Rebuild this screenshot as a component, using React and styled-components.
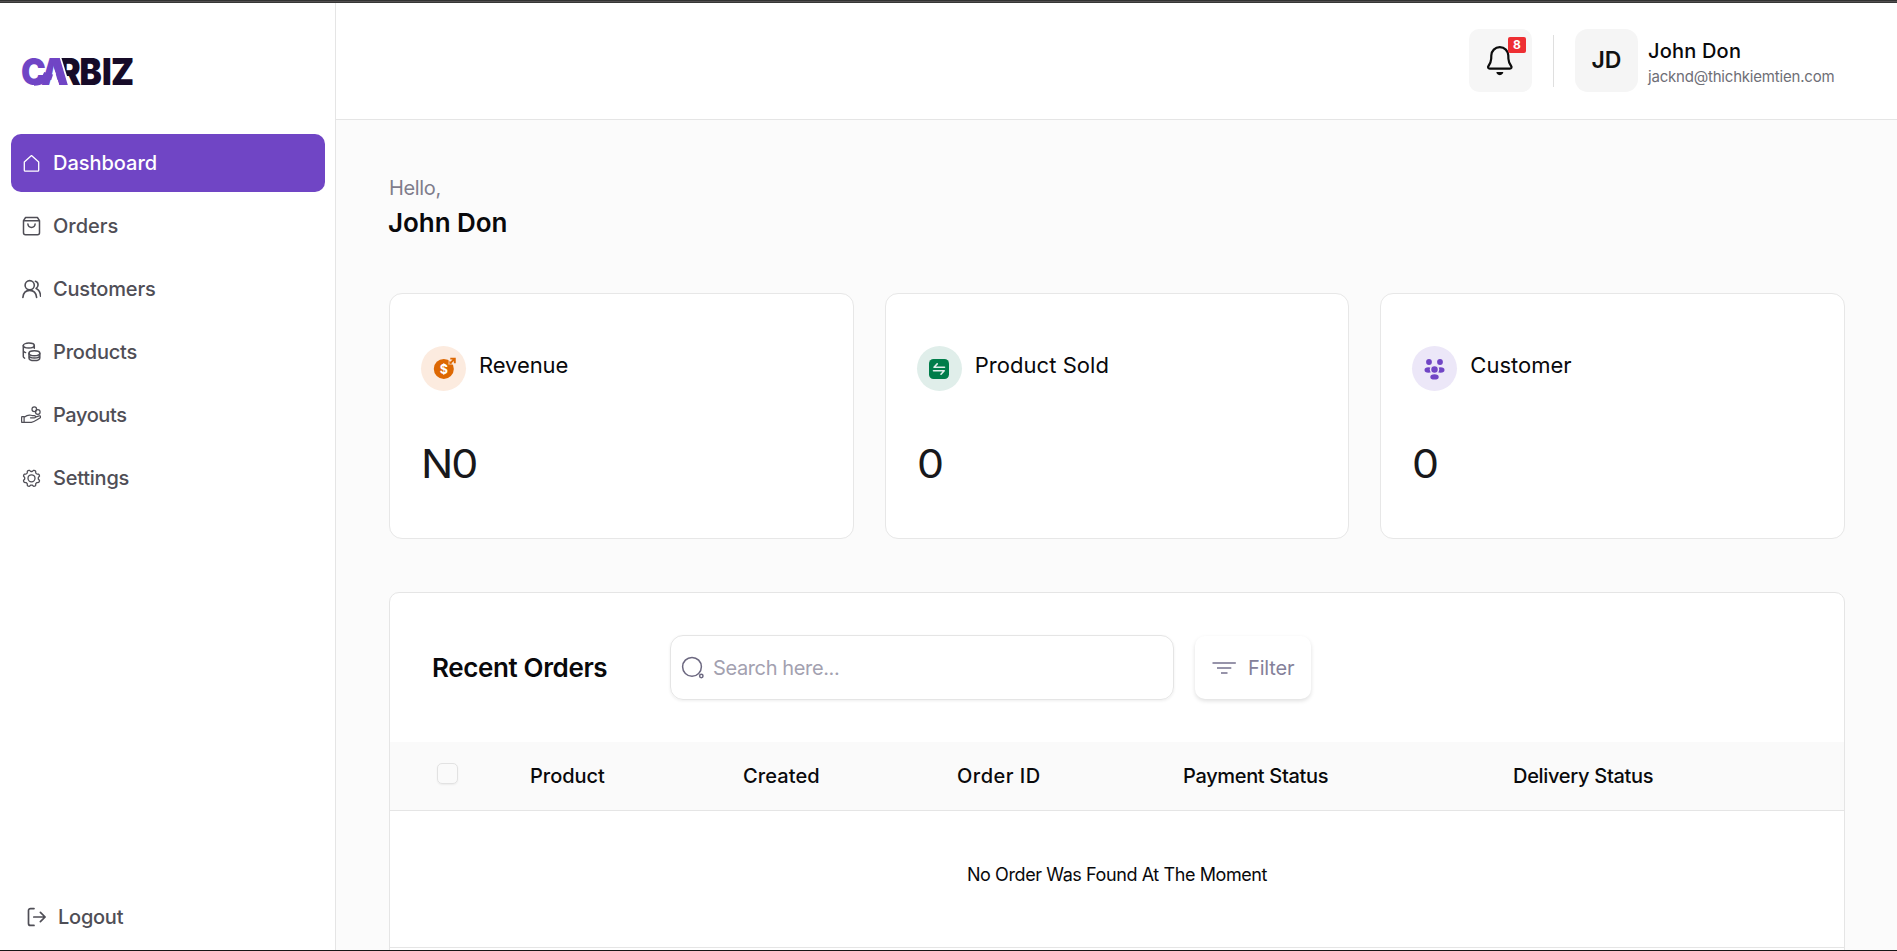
import React from 'react';
import styled, { createGlobalStyle } from 'styled-components';

const GlobalStyle = createGlobalStyle`
  *, *::before, *::after { box-sizing: border-box; }
  body {
    margin: 0;
    background: #fff;
    color: #09090b;
    font-family: Inter, "Liberation Sans", sans-serif;
  }
`;

const purple = '#7045c5';
const ink = '#160b28';
const line = '#e5e5e5';

const Frame = styled.div`
  height: 951px;
  overflow: hidden;
  display: grid;
  grid-template-rows: 3px minmax(0, 1fr) 1px;
`;

const TopEdge = styled.div`
  background: linear-gradient(#323232 0 1px, #535051 1px 2px, #363636 2px);
`;

const BottomEdge = styled.div`
  background: #161616;
`;

const Shell = styled.div`
  display: grid;
  grid-template-columns: 336px minmax(0, 1fr);
  min-height: 0;
`;

const Sidebar = styled.aside`
  display: flex;
  flex-direction: column;
  padding: 53px 10px 0 11px;
  border-right: 1px solid ${line};
`;

const LogoLink = styled.a`
  display: block;
  height: 32px;
  margin: 0 0 46px 11px;

  svg { display: block; overflow: visible; }
`;

const Nav = styled.nav`
  display: flex;
  flex-direction: column;
  gap: 5px;
`;

const NavItem = styled.a`
  display: flex;
  align-items: center;
  gap: 12px;
  height: 58px;
  padding-left: 10px;
  border-radius: 10px;
  font-size: 20px;
  font-weight: 500;
  letter-spacing: ${(p) => p.$track || 0}px;
  color: ${(p) => (p.$active ? '#fff' : '#4f4e56')};
  background: ${(p) => (p.$active ? purple : 'transparent')};

  svg { flex: none; display: block; }
`;

const Logout = styled(NavItem)`
  margin: auto 0 4px;
  padding-left: 15px;
`;

const Main = styled.main`
  min-width: 0;
  display: flex;
  flex-direction: column;
  background: #fbfbfb;
  overflow: hidden;
`;

const Header = styled.header`
  flex: none;
  height: 117px;
  display: flex;
  justify-content: flex-end;
  padding: 26px 62px 0 0;
  background: #fff;
  border-bottom: 1px solid ${line};
`;

const BellButton = styled.div`
  position: relative;
  width: 63px;
  height: 63px;
  border-radius: 10px;
  background: #f6f6f6;
  display: flex;
  align-items: center;
  justify-content: center;

  svg { display: block; }
`;

const Badge = styled.span`
  position: absolute;
  top: 8px;
  right: 6px;
  width: 18px;
  height: 16px;
  border-radius: 2px;
  background: #ee2f33;
  color: #fff;
  font-size: 12px;
  line-height: 16px;
  font-weight: 700;
  text-align: center;
`;

const Divider = styled.div`
  width: 1px;
  height: 52px;
  margin: 6px 21px 0;
  background: #dfdfdf;
`;

const Avatar = styled.div`
  width: 63px;
  height: 63px;
  border-radius: 13px;
  background: #f5f5f5;
  font-size: 23px;
  line-height: 63px;
  font-weight: 600;
  text-align: center;
  color: #111;
`;

const Identity = styled.div`
  width: 187px;
  margin-left: 10px;
  padding-top: 8px;
  white-space: nowrap;
`;

const UserName = styled.div`
  font-size: 20px;
  line-height: 29px;
  font-weight: 500;
  letter-spacing: 0.2px;
`;

const UserEmail = styled.div`
  font-size: 15px;
  line-height: 22px;
  letter-spacing: -0.2px;
  color: #6e6e76;
`;

const Content = styled.div`
  padding: 53px 52px 0 53px;
`;

const Greeting = styled.div`
  font-size: 20px;
  line-height: 30px;
  letter-spacing: -0.34px;
  color: #7f7d8c;
`;

const PageTitle = styled.h1`
  margin: 0 0 51px -1px;
  font-size: 26px;
  line-height: 39px;
  font-weight: 600;
  letter-spacing: -0.05px;
`;

const Stats = styled.section`
  display: grid;
  grid-template-columns: repeat(3, 1fr);
  gap: 31px;
`;

const StatCard = styled.article`
  height: 246px;
  padding: 52px 31px 0;
  border: 1px solid #e7e7e7;
  border-radius: 13px;
  background: #fff;
`;

const StatHead = styled.div`
  display: flex;
  gap: 13px;
  height: 45px;
`;

const StatIcon = styled.div`
  width: 45px;
  height: 45px;
  border-radius: 50%;
  background: ${(p) => p.$tint};

  svg { display: block; }
`;

const StatTitle = styled.div`
  font-size: 22px;
  line-height: 38px;
  letter-spacing: ${(p) => p.$track || 0}px;
`;

const StatValue = styled.div`
  margin-top: 43px;
  font-size: 39px;
  line-height: 60px;
  letter-spacing: -1.9px;
  color: #18181b;
  transform: scaleX(1.1);
  transform-origin: left;
`;

const Panel = styled.section`
  margin-top: 53px;
  height: 420px;
  border: 1px solid ${line};
  border-radius: 10px;
  background: #fff;
`;

const Toolbar = styled.div`
  display: flex;
  align-items: center;
  height: 149px;
  padding-left: 42px;
`;

const PanelTitle = styled.h2`
  width: 238px;
  margin: 0;
  font-size: 26px;
  line-height: 39px;
  font-weight: 600;
  letter-spacing: -0.37px;
  white-space: nowrap;
`;

const SearchBox = styled.div`
  display: flex;
  align-items: center;
  width: 504px;
  height: 65px;
  padding-left: 10px;
  gap: 8px;
  border: 1px solid ${line};
  border-radius: 13px;
  box-shadow: 0 1px 3px rgba(0, 0, 0, 0.07);
  font-size: 20px;
  letter-spacing: -0.38px;
  color: #a3a1b0;

  svg { display: block; }
`;

const FilterButton = styled.div`
  display: flex;
  align-items: center;
  gap: 12px;
  width: 116px;
  height: 63px;
  margin-left: 21px;
  padding-left: 17px;
  border-radius: 10px;
  box-shadow: 0 2px 4px rgba(0, 0, 0, 0.13);
  font-size: 20px;
  letter-spacing: -0.16px;
  color: #84819a;

  svg { display: block; }
`;

const TableHead = styled.div`
  display: grid;
  grid-template-columns: 140px 213px 214px 226px 330px 1fr;
  align-items: center;
  height: 69px;
  background: #fafafa;
  border-bottom: 1px solid ${line};
`;

const Checkbox = styled.span`
  width: 21px;
  height: 21px;
  margin: 0 0 5px 47px;
  border: 1px solid #e2e2e2;
  border-radius: 5px;
  box-shadow: 0 1px 2px rgba(0, 0, 0, 0.06);
`;

const ColumnLabel = styled.span`
  font-size: 20px;
  line-height: 28px;
  font-weight: 500;
  letter-spacing: ${(p) => p.$track || 0}px;
  white-space: nowrap;
`;

const EmptyRow = styled.div`
  height: 137px;
  padding-top: 50px;
  border-bottom: 1px solid ${line};
  text-align: center;
  font-size: 18px;
  line-height: 28px;
  letter-spacing: -0.41px;
`;

const NavSvg = ({ children, w = 1.5 }) => (
  <svg width="20" height="20" viewBox="0 0 20 20" fill="none" stroke="currentColor"
    strokeWidth={w} strokeLinecap="round" strokeLinejoin="round">
    {children}
  </svg>
);

const HomeIcon = () => (
  <NavSvg w={1.3}>
    <path d="M10.5 2.6 3.3 9v8.2c0 .6.3.9.9.9h12.6c.6 0 .9-.3.9-.9V9z" />
  </NavSvg>
);

const BagIcon = () => (
  <NavSvg>
    <path d="M4.6 1.5h11.8l2.1 3.2v12a2 2 0 0 1-2 2h-12a2 2 0 0 1-2-2v-12zM2.5 4.7h16M6.9 8c.2 2.1 1.7 3.4 3.6 3.4S13.9 10.1 14.1 8" />
  </NavSvg>
);

const UsersIcon = () => (
  <NavSvg w={1.6}>
    <circle cx="8.7" cy="6.2" r="4.6" />
    <path d="M1.9 18.4c.4-4.4 2.8-7 6.8-7s6.4 2.6 6.9 7M14.5 2.3c1.7.6 2.7 2.1 2.5 3.9-.1 1.4-.8 2.5-1.9 3.2 2.8 1.2 4.3 4 4.5 7.9" />
  </NavSvg>
);

const CoinsIcon = () => (
  <NavSvg w={1.5}>
    <ellipse cx="7.8" cy="3.6" rx="5.5" ry="2.5" />
    <path d="M2.3 3.6v11c0 .7.6 1.2 1.3 1.5M2.3 8.8c0 .8 1 1.4 2.3 1.8M13.3 3.6v2.6" />
    <ellipse cx="13.4" cy="11.2" rx="5.4" ry="2.5" />
    <path d="M8 11.2v4.7c0 1.5 2.4 2.7 5.4 2.7s5.4-1.2 5.4-2.7v-4.7M8 13.6c0 1.5 2.4 2.5 5.4 2.5s5.4-1 5.4-2.5" />
  </NavSvg>
);

const PayoutIcon = () => (
  <NavSvg w={1.25}>
    <circle cx="13.3" cy="4.2" r="2.3" />
    <circle cx="16.8" cy="7" r="2.3" />
    <path d="M.8 11.7h2.3v5.7H.8c-.3-1.8-.3-3.9 0-5.7zM3.1 12.3c2-1.5 3.7-2.3 5.3-2.3 1.3 0 2 .5 3.1.5h1.8c1.7 0 1.7 2.3 0 2.3H9.5M14.4 12.1l3.8-1.2c1.7-.3 2 1.4.7 2.1-3.5 2-5.3 4-8.5 4.4H3.1" />
  </NavSvg>
);

const gearPath = (() => {
  const pts = [];
  for (let i = 0; i < 96; i += 1) {
    const a = (i / 96) * Math.PI * 2;
    const r = 7.6 + 0.85 * Math.tanh(2 * Math.cos(8 * a + Math.PI));
    pts.push(`${(10.5 + r * Math.cos(a)).toFixed(2)} ${(10.3 + r * Math.sin(a)).toFixed(2)}`);
  }
  return `M${pts.join('L')}Z`;
})();

const GearIcon = () => (
  <NavSvg w={1.3}>
    <path d={gearPath} />
    <circle cx="10.5" cy="10.3" r="3.5" />
  </NavSvg>
);

const LogoutIcon = () => (
  <NavSvg w={1.7}>
    <path d="M8 1.6H4.5a2 2 0 0 0-2 2v12.8a2 2 0 0 0 2 2H8M7.8 10h11.2M14.4 5.3l4.7 4.7-4.7 4.7" />
  </NavSvg>
);

const BellIcon = () => (
  <svg width="32" height="32" viewBox="0 0 32 32" fill="none" stroke="#0c0c0c"
    strokeWidth="2.2" strokeLinecap="round" strokeLinejoin="round">
    <path d="M14.8 2.2c-4.8 0-8.4 3.7-8.5 8.4l-.1 3.2c-.1 2.9-.9 4.6-2.7 7.2-1 1.4-.3 2.7 1.3 2.700h20c1.600 0 2.300-1.300 1.300-2.700-1.800-2.600-2.600-4.300-2.700-7.200l-.1-3.200c-.1-4.700-3.700-8.400-8.500-8.400z" />
    <path d="M12 27.7c.6 1.2 1.6 1.8 2.8 1.8s2.2-.6 2.8-1.8z" fill="#0c0c0c" strokeWidth="1.3" />
  </svg>
);

const Logo = () => (
  <svg width="112" height="32" viewBox="0 0 112 32">
    <defs>
      <linearGradient id="wordmark" gradientUnits="userSpaceOnUse" x1="0" y1="0" x2="84" y2="0">
        <stop offset=".5" stopColor={purple} />
        <stop offset=".5" stopColor={ink} />
      </linearGradient>
    </defs>
    <text x="-1 21.2 40.5 64 88.8 99" y="29" transform="scale(.9 1)" fill="url(#wordmark)"
      fontFamily="Inter, sans-serif" fontWeight="900" fontSize="37">CARBIZ</text>
    <path d="M36 1.500h3.300L48 29.800h-9.500z" fill="#fff" />
    <path d="M28.500 2.100h9.300L45.800 29h-8.300L30 6z" fill={purple} />
    <path d="M27.300 30 32.500 14l4.800 16z" fill="#fff" />
    <path d="M12 26.700c7.500 0 10.500-3 13-9.700" fill="none" stroke={purple} strokeWidth="6" />
  </svg>
);

const RevenueIcon = () => (
  <svg width="45" height="45" viewBox="0 0 45 45">
    <circle cx="22.8" cy="22.9" r="10" fill="#dd6803" />
    <path d="M27 18.5 27.5 14l3-3h5v7l-4 1z" fill="#fcebdf" opacity=".5" />
    <path d="M29.3 12.600h4.500v4.600M33.500 13l-4.500 4.400" fill="none" stroke="#dd6803" strokeWidth="1.9" />
    <text x="22.8" y="27.5" fill="#fff" fontSize="12.5" fontWeight="700" textAnchor="middle">$</text>
  </svg>
);

const SoldIcon = () => (
  <svg width="45" height="45" viewBox="0 0 45 45">
    <rect x="12" y="13" width="20" height="20" rx="4.5" fill="#007d4a" />
    <path d="M27.5 21.2H17l3.2-3.3M16.5 24.8h10.7L24 28.2" fill="none" stroke="#e0eeea" strokeWidth="1.6" strokeLinecap="round" strokeLinejoin="round" />
  </svg>
);

const CustomerIcon = () => (
  <svg width="45" height="45" viewBox="0 0 45 45">
    <g fill={purple}>
      <circle cx="17" cy="16" r="2.9" />
      <circle cx="28" cy="16" r="2.9" />
      <ellipse cx="16.4" cy="24" rx="3.9" ry="2.8" />
      <ellipse cx="28.6" cy="24" rx="3.9" ry="2.8" />
      <circle cx="22.5" cy="23.5" r="4" stroke="#ece7f8" strokeWidth="1.5" />
      <ellipse cx="22.5" cy="30.9" rx="4.2" ry="2.7" />
    </g>
  </svg>
);

const SearchIcon = () => (
  <svg width="24" height="24" viewBox="0 0 24 24" fill="none" stroke="#6c6880" strokeWidth="1.5">
    <circle cx="11" cy="10.8" r="9.4" />
    <circle cx="20.3" cy="20" r="1.7" />
  </svg>
);

const FilterIcon = () => (
  <svg width="24" height="14" viewBox="0 0 24 14" stroke="#9794aa" strokeWidth="1.8">
    <path d="M.5 2h23.300M5 7h14.300M9 12h6.500" />
  </svg>
);

const navItems = [
  { label: 'Dashboard', icon: HomeIcon, track: -0.02, active: true },
  { label: 'Orders', icon: BagIcon, track: 0 },
  { label: 'Customers', icon: UsersIcon, track: -0.18 },
  { label: 'Products', icon: CoinsIcon, track: -0.18 },
  { label: 'Payouts', icon: PayoutIcon, track: -0.42 },
  { label: 'Settings', icon: GearIcon, track: -0.23 },
];

const stats = [
  { title: 'Revenue', value: 'N0', icon: RevenueIcon, tint: '#fcebdf', track: -0.08 },
  { title: 'Product Sold', value: '0', icon: SoldIcon, tint: '#e0eeea', track: 0.05 },
  { title: 'Customer', value: '0', icon: CustomerIcon, tint: '#ece7f8', track: 0 },
];

const columns = [
  ['Product', -0.03],
  ['Created', 0.1],
  ['Order ID', 0.5],
  ['Payment Status', -0.33],
  ['Delivery Status', -0.3],
];

export default function App() {
  return (
    <Frame>
      <GlobalStyle />
      <TopEdge />
      <Shell>
        <Sidebar>
          <LogoLink><Logo /></LogoLink>
          <Nav>
            {navItems.map(({ label, icon: Icon, track, active }) => (
              <NavItem key={label} $active={active} $track={track}>
                <Icon />
                {label}
              </NavItem>
            ))}
          </Nav>
          <Logout as="div" $track={-0.25}>
            <LogoutIcon />
            Logout
          </Logout>
        </Sidebar>
        <Main>
          <Header>
            <BellButton>
              <BellIcon />
              <Badge>8</Badge>
            </BellButton>
            <Divider />
            <Avatar>JD</Avatar>
            <Identity>
              <UserName>John Don</UserName>
              <UserEmail>jacknd@thichkiemtien.com</UserEmail>
            </Identity>
          </Header>
          <Content>
            <Greeting>Hello,</Greeting>
            <PageTitle>John Don</PageTitle>
            <Stats>
              {stats.map(({ title, value, icon: Icon, tint, track }) => (
                <StatCard key={title}>
                  <StatHead>
                    <StatIcon $tint={tint}><Icon /></StatIcon>
                    <StatTitle $track={track}>{title}</StatTitle>
                  </StatHead>
                  <StatValue>{value}</StatValue>
                </StatCard>
              ))}
            </Stats>
            <Panel>
              <Toolbar>
                <PanelTitle>Recent Orders</PanelTitle>
                <SearchBox>
                  <SearchIcon />
                  Search here...
                </SearchBox>
                <FilterButton>
                  <FilterIcon />
                  Filter
                </FilterButton>
              </Toolbar>
              <TableHead>
                <Checkbox />
                {columns.map(([label, track]) => (
                  <ColumnLabel key={label} $track={track}>{label}</ColumnLabel>
                ))}
              </TableHead>
              <EmptyRow>No Order Was Found At The Moment</EmptyRow>
            </Panel>
          </Content>
        </Main>
      </Shell>
      <BottomEdge />
    </Frame>
  );
}
